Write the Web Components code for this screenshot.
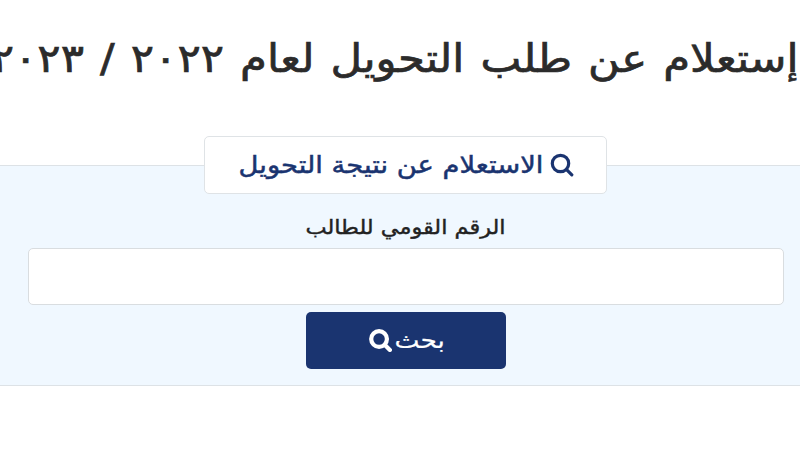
<!DOCTYPE html>
<html lang="ar" dir="rtl">
<head>
<meta charset="utf-8">
<title>استعلام</title>
<style>
html,body{margin:0;padding:0;background:#fff;width:800px;height:450px;overflow:hidden;font-family:"DejaVu Sans","Noto Sans",sans-serif}
</style>
</head>
<body>
<transfer-page></transfer-page>
<script>
const searchIcon = (size,color,sw)=>`<svg width="${size}" height="${size}" viewBox="0 0 24 24" fill="none" stroke="${color}" stroke-width="${sw}" stroke-linecap="round" aria-hidden="true"><circle cx="10.5" cy="10.5" r="8.2"/><path d="M16.6 16.6 21.8 21.8"/></svg>`;

class PageTitle extends HTMLElement{
  constructor(){super();this.attachShadow({mode:'open'}).innerHTML=`<style>
  :host{display:flex;justify-content:center;height:120px;padding-top:32px;box-sizing:border-box;white-space:nowrap;color:#2b2b2b;font:400 39px/54px "DejaVu Sans",sans-serif;-webkit-text-stroke:.7px #2b2b2b;word-spacing:2px}
  h1{margin:0 10px 0 0;font:inherit;flex:none;transform:scaleX(1.114)}
  </style><h1><slot></slot></h1>`;}
}
class LegendTab extends HTMLElement{
  constructor(){super();this.attachShadow({mode:'open'}).innerHTML=`<style>
  :host{display:flex;align-items:center;justify-content:flex-start;gap:7px;box-sizing:border-box;width:403px;height:58px;padding-right:32px;margin:0 auto;background:#fff;border:1px solid #dfe3e6;border-radius:5px;color:#1a3470;font:400 24px/1 "DejaVu Sans",sans-serif;-webkit-text-stroke:.5px #1a3470;white-space:nowrap}
  svg{flex:none}
  span{transform:scaleX(1.14);transform-origin:right center}
  </style>${searchIcon(24,'#1a3470',3.2)}<span><slot></slot></span>`;}
}
class SearchButton extends HTMLElement{
  constructor(){super();this.attachShadow({mode:'open'}).innerHTML=`<style>
  :host{display:flex;align-items:center;justify-content:flex-start;gap:3px;box-sizing:border-box;width:200px;height:57px;padding-right:61px;margin:0 auto;background:#1a3470;border-radius:5px;color:#fff;font:400 23px/1 "DejaVu Sans",sans-serif;-webkit-text-stroke:.2px #fff}
  svg{flex:none}
  span{transform:scaleX(1.15);transform-origin:right center;margin-left:6px}
  </style><span><slot></slot></span>${searchIcon(23,'#fff',4.4)}`;}
}
class TextField extends HTMLElement{
  constructor(){super();this.attachShadow({mode:'open'}).innerHTML=`<style>
  :host{display:block}
  label{display:block;text-align:center;color:#222;font:400 20px/26px "DejaVu Sans",sans-serif;-webkit-text-stroke:.4px #222;margin-bottom:8px;transform:scaleX(1.12)}
  input{display:block;box-sizing:border-box;width:756px;height:57px;margin:0 auto;background:#fff;border:1px solid #d9dde0;border-radius:5px;outline:none}
  </style><label for="f"><slot></slot></label><input id="f" type="text">`;}
}
class SearchPanel extends HTMLElement{
  constructor(){super();this.attachShadow({mode:'open'}).innerHTML=`<style>
  :host{display:block;box-sizing:border-box;height:221px;background:#f0f8ff;border-top:1px solid #dde2e6;border-bottom:1px solid #dde2e6;padding-left:11px}
  .tab{margin-top:-30px}
  .field{margin-top:20px}
  .btn{margin-top:7px}
  </style><div class="tab"><slot name="tab"></slot></div><div class="field"><slot name="field"></slot></div><div class="btn"><slot name="btn"></slot></div>`;}
}
class TransferPage extends HTMLElement{
  constructor(){super();this.attachShadow({mode:'open'}).innerHTML=`<style>
  :host{display:block;width:800px;height:450px;overflow:hidden}
  .gap{height:45px}
  </style>
  <page-title>إستعلام عن طلب التحويل لعام ٢٠٢٢ / ٢٠٢٣</page-title>
  <div class="gap"></div>
  <search-panel>
    <legend-tab slot="tab">الاستعلام عن نتيجة التحويل</legend-tab>
    <text-field slot="field">الرقم القومي للطالب</text-field>
    <search-button slot="btn">بحث</search-button>
  </search-panel>`;}
}
customElements.define('page-title',PageTitle);
customElements.define('legend-tab',LegendTab);
customElements.define('search-button',SearchButton);
customElements.define('text-field',TextField);
customElements.define('search-panel',SearchPanel);
customElements.define('transfer-page',TransferPage);
</script>
</body>
</html>
